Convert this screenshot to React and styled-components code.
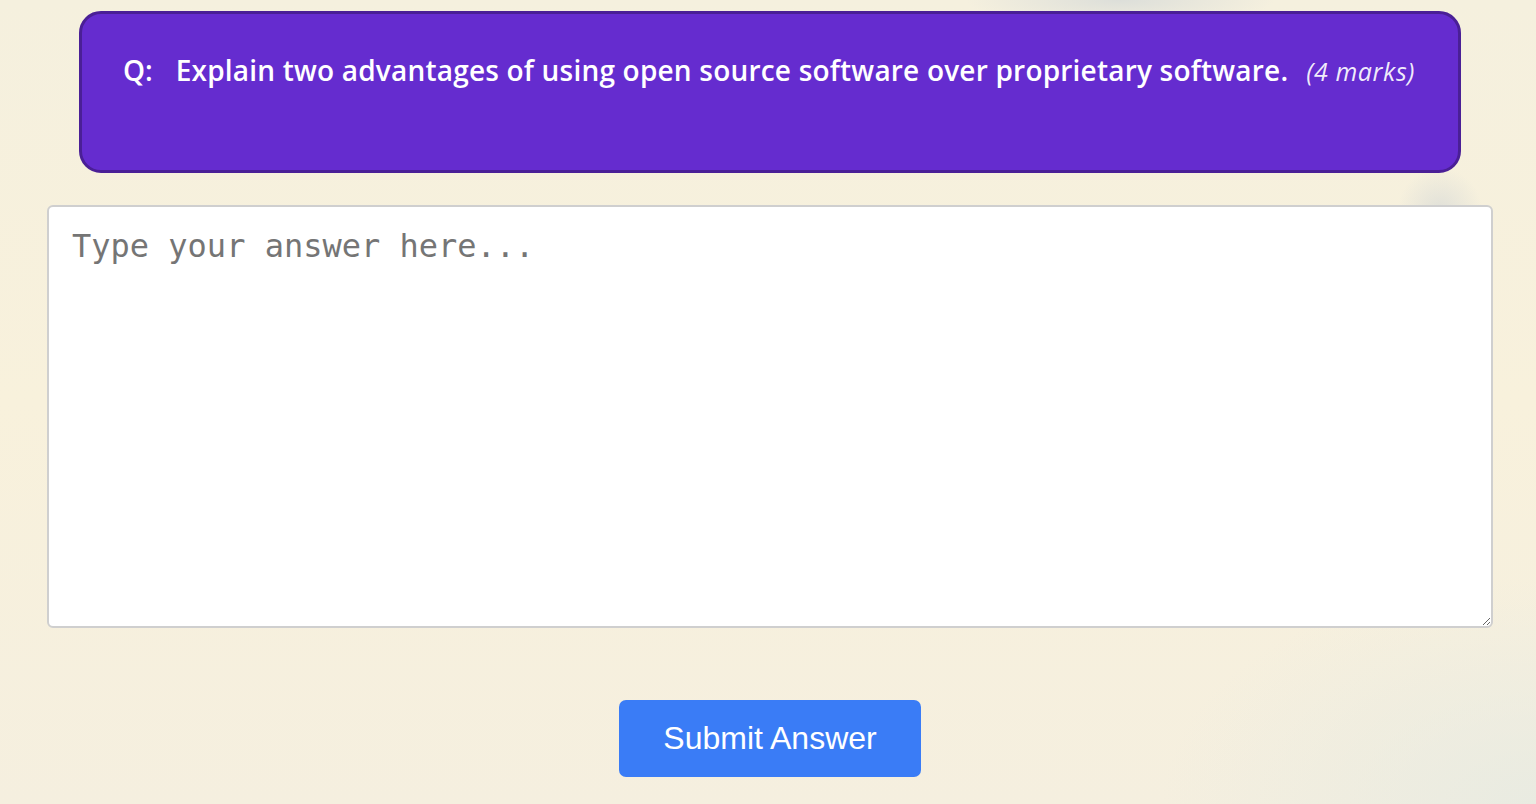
import React from 'react'
import styled, { createGlobalStyle } from 'styled-components'

const GlobalStyle = createGlobalStyle`
    html, body {
        margin: 0;
        padding: 0;
    }
    body {
        min-height: 804px;
        font-family: "Liberation Sans", Arial, sans-serif;
        background:
            radial-gradient(ellipse 220px 40px at 1120px 0px, rgba(200, 208, 214, 0.55), transparent 70%),
            radial-gradient(ellipse 60px 60px at 1440px 210px, rgba(210, 214, 214, 0.6), transparent 70%),
            radial-gradient(ellipse 500px 300px at 1536px 804px, rgba(230, 234, 226, 0.8), transparent 75%),
            linear-gradient(180deg, #f5f0de 0%, #f8f1dc 50%, #f5efdf 100%);
    }
`

const Page = styled.main`
    display: flex;
    flex-direction: column;
    align-items: center;
    padding: 11px 43px 27px 47px;
`

const QuestionCard = styled.section`
    box-sizing: border-box;
    width: 1382px;
    min-height: 162px;
    padding: 37px 30px 40px 41px;
    background: #652ccf;
    border: 3px solid #4a1f96;
    border-radius: 22px;
    color: #fff;
    display: flex;
    align-items: baseline;
    font-family: "Open Sans", "Noto Sans", sans-serif;
`

const Label = styled.span`
    font-size: 28px;
    font-weight: 600;
    margin-right: 23px;
`

const QuestionText = styled.span`
    font-size: 28px;
    font-weight: 600;
    letter-spacing: 0.2px;
    white-space: nowrap;
`

const Marks = styled.span`
    font-size: 25px;
    font-style: italic;
    font-weight: 400;
    letter-spacing: 0.6px;
    margin-left: 18px;
    white-space: nowrap;
    color: rgba(255, 255, 255, 0.92);
`

const AnswerBox = styled.textarea`
    box-sizing: border-box;
    width: 100%;
    height: 423px;
    margin-top: 32px;
    padding: 18px 23px;
    border: 2px solid #cfcfcf;
    border-radius: 6px;
    background: #fff;
    font-family: "DejaVu Sans Mono", "Liberation Mono", monospace;
    font-size: 32px;
    line-height: 42px;
    color: #222;
    resize: vertical;
    outline: none;

    &::placeholder {
        color: #757575;
    }
`

const SubmitButton = styled.button`
    margin-top: 72px;
    width: 302px;
    height: 77px;
    border: none;
    border-radius: 7px;
    background: #3a7cf6;
    color: #fff;
    font-family: "Liberation Sans", Arial, sans-serif;
    font-size: 32px;
    cursor: pointer;
`

function App() {
    return (
        <>
            <GlobalStyle />
            <Page>
                <QuestionCard>
                    <Label>Q:</Label>
                    <QuestionText>Explain two advantages of using open source software over proprietary software.</QuestionText>
                    <Marks>(4 marks)</Marks>
                </QuestionCard>
                <AnswerBox placeholder="Type your answer here..." />
                <SubmitButton>Submit Answer</SubmitButton>
            </Page>
        </>
    )
}

export default App
